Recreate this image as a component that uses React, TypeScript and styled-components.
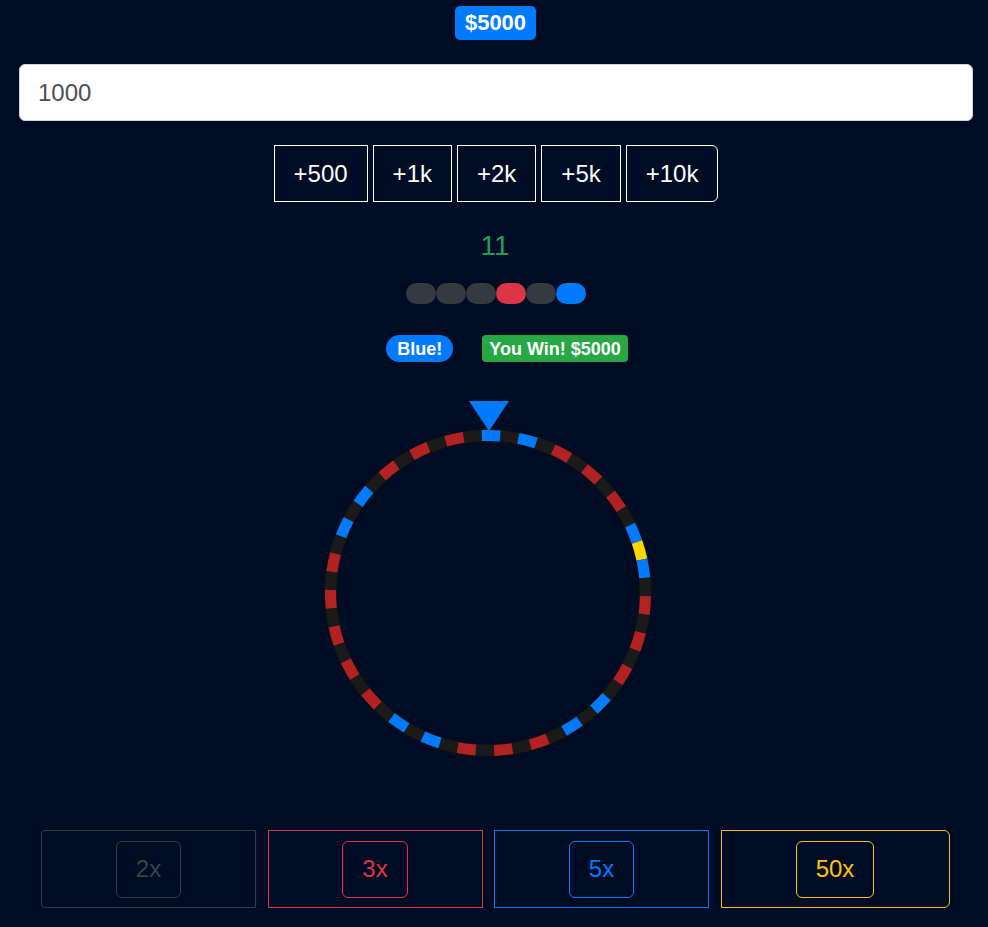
import React from "react";
import styled, { createGlobalStyle } from "styled-components";

const GlobalStyle = createGlobalStyle`
  html, body {
    margin: 0;
    padding: 0;
    background: #000c24;
  }
  body {
    font-family: "Liberation Sans", Arial, sans-serif;
    color: #fff;
  }
  * { box-sizing: border-box; }
`;

const Page = styled.div`
  width: 988px;
  min-height: 927px;
  padding-top: 6px;
  display: flex;
  flex-direction: column;
`;

const BalanceRow = styled.div`
  display: flex;
  justify-content: center;
  padding-left: 3px;
`;

const Balance = styled.span`
  display: inline-flex;
  align-items: center;
  height: 34px;
  padding: 0 9.5px;
  border-radius: 5px;
  background: #007bff;
  color: #fff;
  font-weight: 700;
  font-size: 22px;
  line-height: 1;
`;

const BetInput = styled.input`
  margin: 24px 15px 0 19px;
  height: 57px;
  border: 1px solid #ced4da;
  border-radius: 6px;
  background: #fff;
  padding: 0 18px;
  font-family: "Liberation Sans", Arial, sans-serif;
  font-size: 24px;
  color: #495057;
  outline: none;
`;

const QuickRow = styled.div`
  margin-top: 24px;
  display: flex;
  justify-content: center;
  gap: 5px;
  padding-left: 4px;
`;

const QuickButton = styled.button<{ $last?: boolean }>`
  height: 57px;
  padding: 0 19px;
  border: 1px solid #fff;
  border-radius: ${(p) => (p.$last ? "0 6px 6px 0" : "0")};
  background: transparent;
  color: #fff;
  font-family: "Liberation Sans", Arial, sans-serif;
  font-size: 24px;
  cursor: pointer;
`;

const Result = styled.div`
  margin-top: 27px;
  text-align: center;
  font-size: 28px;
  line-height: 34px;
  color: #1c9d5b;
  padding-left: 2px;
`;

const HistoryRow = styled.div`
  margin-top: 20px;
  display: flex;
  justify-content: center;
  padding-left: 3px;
`;

const HistoryPill = styled.span<{ $color: string }>`
  width: 30px;
  height: 21px;
  border-radius: 11px;
  background: ${(p) => p.$color};
`;

const StatusRow = styled.div`
  margin-top: 31px;
  display: flex;
  justify-content: center;
  gap: 29px;
  padding-left: 26px;
`;

const StatusBadge = styled.span<{ $color: string; $pill?: boolean }>`
  display: inline-flex;
  align-items: center;
  height: 27px;
  padding: 0 ${(p) => (p.$pill ? "11px" : "7px")};
  border-radius: ${(p) => (p.$pill ? "14px" : "4px")};
  background: ${(p) => p.$color};
  color: #fff;
  font-weight: 700;
  font-size: 18px;
  line-height: 1;
`;

const WheelArea = styled.div`
  margin-top: 39px;
  display: flex;
  flex-direction: column;
  align-items: center;
  padding-right: 12px;
`;

const Pointer = styled.div`
  width: 0;
  height: 0;
  border-left: 20px solid transparent;
  border-right: 20px solid transparent;
  border-top: 30px solid #007bff;
  position: relative;
  z-index: 1;
  margin-left: 1px;
`;

const WheelSvg = styled.svg`
  display: block;
  margin-top: -2px;
`;

const BetGrid = styled.div`
  margin: 73px 0 0 41px;
  display: grid;
  grid-template-columns: 215px 215px 215px 229px;
  column-gap: 11.5px;
`;

const BetBox = styled.div<{ $color: string; $radius: string }>`
  height: 78px;
  border: 1px solid ${(p) => p.$color};
  border-radius: ${(p) => p.$radius};
  display: flex;
  align-items: center;
  justify-content: center;
`;

const BetButton = styled.button<{ $border: string; $text: string }>`
  height: 57px;
  padding: 0 19px;
  border: 1px solid ${(p) => p.$border};
  border-radius: 6px;
  background: transparent;
  color: ${(p) => p.$text};
  font-family: "Liberation Sans", Arial, sans-serif;
  font-size: 24px;
  cursor: pointer;
`;

const COLORS: Record<string, string> = {
  k: "#1a1a1a",
  r: "#b22222",
  b: "#007bff",
  y: "#ffd700",
};

// 54 segments, clockwise from top
const SEGMENTS = (() => {
  const arr: string[] = [];
  const red = new Set([4, 6, 8, 14, 16, 18, 24, 26, 28, 34, 36, 38, 40, 42, 48, 50, 52]);
  const blue = new Set([0, 2, 10, 12, 20, 22, 30, 32, 44, 46]);
  for (let i = 0; i < 54; i++) {
    if (i === 11) arr.push("y");
    else if (red.has(i)) arr.push("r");
    else if (blue.has(i)) arr.push("b");
    else arr.push("k");
  }
  return arr;
})();

function polar(cx: number, cy: number, r: number, deg: number) {
  const rad = ((deg - 90) * Math.PI) / 180;
  return [cx + r * Math.cos(rad), cy + r * Math.sin(rad)];
}

const Wheel: React.FC = () => {
  const size = 328;
  const c = size / 2;
  const r = 157.5;
  const step = 360 / 54;
  const offset = 1.1;
  return (
    <WheelSvg width={size} height={size} viewBox={`0 0 ${size} ${size}`}>
      <circle cx={c} cy={c} r={r} fill="none" stroke="#111" strokeWidth={13} />
      <circle cx={c} cy={c} r={r} fill="none" stroke={COLORS.k} strokeWidth={11} />
      {SEGMENTS.map((s, i) => {
        if (s === "k") return null;
        const a0 = offset + (i - 0.5) * step;
        const a1 = a0 + step;
        const [x0, y0] = polar(c, c, r, a0);
        const [x1, y1] = polar(c, c, r, a1);
        return (
          <path
            key={i}
            d={`M ${x0} ${y0} A ${r} ${r} 0 0 1 ${x1} ${y1}`}
            fill="none"
            stroke={COLORS[s]}
            strokeWidth={11}
          />
        );
      })}
    </WheelSvg>
  );
};

const quick = ["+500", "+1k", "+2k", "+5k", "+10k"];
const history = ["#343a40", "#343a40", "#343a40", "#dc3545", "#343a40", "#007bff"];
const bets = [
  { label: "2x", color: "#343a40", text: "#3b4148", radius: "4px 0 0 4px" },
  { label: "3x", color: "#dc3545", text: "#dc3545", radius: "0" },
  { label: "5x", color: "#007bff", text: "#007bff", radius: "0" },
  { label: "50x", color: "#ffc107", text: "#ffc107", radius: "0 6px 6px 0" },
];

export default function App() {
  return (
    <>
      <GlobalStyle />
      <Page>
        <BalanceRow>
          <Balance>$5000</Balance>
        </BalanceRow>
        <BetInput defaultValue="1000" />
        <QuickRow>
          {quick.map((q, i) => (
            <QuickButton key={q} $last={i === quick.length - 1}>
              {q}
            </QuickButton>
          ))}
        </QuickRow>
        <Result>11</Result>
        <HistoryRow>
          {history.map((c, i) => (
            <HistoryPill key={i} $color={c} />
          ))}
        </HistoryRow>
        <StatusRow>
          <StatusBadge $color="#007bff" $pill>
            Blue!
          </StatusBadge>
          <StatusBadge $color="#28a745">You Win! $5000</StatusBadge>
        </StatusRow>
        <WheelArea>
          <Pointer />
          <Wheel />
        </WheelArea>
        <BetGrid>
          {bets.map((b) => (
            <BetBox key={b.label} $color={b.color} $radius={b.radius}>
              <BetButton $border={b.color} $text={b.text}>
                {b.label}
              </BetButton>
            </BetBox>
          ))}
        </BetGrid>
      </Page>
    </>
  );
}
